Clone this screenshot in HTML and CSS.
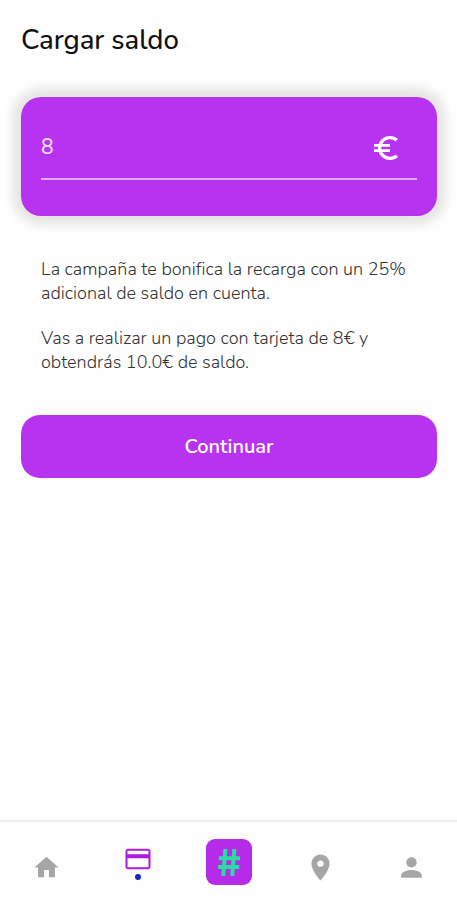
FILE: index.html
```html
<!DOCTYPE html>
<html lang="es">
  <head>
    <meta charset="UTF-8" />
    <meta name="viewport" content="width=device-width, initial-scale=1.0" />
    <title>Cargar saldo</title>
    <link rel="stylesheet" href="styles.css">
  </head>
  <body>
    <main class="content">
      <h1 class="title">Cargar saldo</h1>

      <div class="amount-card">
        <div class="amount-field">
          <span class="amount-value">8</span>
          <svg class="euro-icon" viewBox="0 0 24 24">
            <path d="M15 18.5c-2.51 0-4.68-1.42-5.76-3.5H15v-2H8.58c-.05-.33-.08-.66-.08-1s.03-.67.08-1H15V9H9.24C10.32 6.92 12.5 5.5 15 5.5c1.61 0 3.09.59 4.23 1.57L21 5.3C19.41 3.87 17.3 3 15 3c-3.92 0-7.24 2.51-8.48 6H3v2h3.06c-.04.33-.06.66-.06 1s.02.67.06 1H3v2h3.52c1.24 3.49 4.56 6 8.48 6 2.31 0 4.41-.87 6-2.3l-1.78-1.77c-1.13.98-2.6 1.57-4.22 1.57z" />
          </svg>
        </div>
      </div>

      <div class="info">
        <p class="info-campaign">
          La campaña te bonifica la recarga con un 25%<br />
          adicional de saldo en cuenta.
        </p>
        <p class="info-payment">
          Vas a realizar un pago con tarjeta de 8€ y<br />
          obtendrás 10.0€ de saldo.
        </p>
      </div>

      <button class="continue-button" type="button">Continuar</button>
    </main>

    <nav class="tab-bar">
      <a class="tab" href="#" aria-label="Inicio">
        <svg class="tab-icon" viewBox="0 0 24 24">
          <path d="M10 20v-6h4v6h5v-8h3L12 3 2 12h3v8z" />
        </svg>
      </a>
      <a class="tab active" href="#" aria-label="Saldo">
        <svg class="tab-icon" viewBox="0 0 24 24">
          <path d="M20 3.8H4c-1.11 0-1.99.8-1.99 1.9L2 18.2c0 1.11.89 2 2 2h16c1.11 0 2-.89 2-2V5.7c0-1.1-.89-1.9-2-1.9zm.4 14.8H3.6v-7.2h16.8v7.2zm0-10.4H3.6V5.4h16.8v2.8z" />
        </svg>
        <span class="tab-dot"></span>
      </a>
      <a class="tab main" href="#" aria-label="Principal">
        <span class="hash-box">
          <svg class="hash-icon" viewBox="0 0 22 27">
            <path d="M7.4 0L5.2 27M16.4 0L14.2 27M.8 9.3H22M0 17.9H21.2" />
          </svg>
        </span>
      </a>
      <a class="tab large" href="#" aria-label="Mapa">
        <svg class="tab-icon" viewBox="0 0 24 24">
          <path d="M12 2C8.13 2 5 5.13 5 9c0 5.25 7 13 7 13s7-7.75 7-13c0-3.87-3.13-7-7-7zm0 9.5c-1.38 0-2.5-1.12-2.5-2.5s1.12-2.5 2.5-2.5 2.5 1.12 2.5 2.5-1.12 2.5-2.5 2.5z" />
        </svg>
      </a>
      <a class="tab large" href="#" aria-label="Perfil">
        <svg class="tab-icon" viewBox="0 0 24 24">
          <path d="M12 12c2.21 0 4-1.79 4-4s-1.79-4-4-4-4 1.79-4 4 1.79 4 4 4zm0 2c-2.67 0-8 1.34-8 4v2h16v-2c0-2.66-5.33-4-8-4z" />
        </svg>
      </a>
    </nav>
  </body>
</html>
```
FILE: styles.css
```css
* {
  margin: 0;
  padding: 0;
  box-sizing: border-box;
}

body {
  height: 100vh;
  display: flex;
  flex-direction: column;
  background: #fefefe;
  color: #111;
  font-family: Nunito, "Open Sans", "Noto Sans", sans-serif;
  overflow: hidden;
}

.content {
  flex: 1;
  padding: 20px 20px 0 21px;
}

.title {
  font-size: 27.5px;
  font-weight: 500;
  line-height: 40px;
  letter-spacing: -0.05px;
  white-space: nowrap;
}

.amount-card {
  height: 119px;
  margin-top: 37px;
  padding: 20px;
  background: #b833ef;
  border-radius: 20px;
  box-shadow: 0 0 10px 9px #e6e6e4;
}

.amount-field {
  display: flex;
  align-items: center;
  justify-content: space-between;
  height: 63px;
  padding: 0 15px 2px 0;
  border-bottom: 2px solid #e2a9f9;
}

.amount-value {
  color: #f6dcfd;
  font-size: 21px;
  font-weight: 500;
  line-height: 28px;
}

.euro-icon {
  width: 32px;
  height: 32px;
  margin-top: 2px;
  fill: #fff;
}

.info {
  padding: 41px 0 0 20px;
  color: #333;
  font-size: 18px;
  font-weight: 300;
  line-height: 24px;
  letter-spacing: 0.02px;
  white-space: nowrap;
}

.info-payment {
  margin-top: 21px;
}

.continue-button {
  display: block;
  width: 100%;
  height: 63px;
  margin-top: 41px;
  border: none;
  border-radius: 19px;
  background: #b833ef;
  color: #fff;
  font-family: inherit;
  font-size: 20px;
  font-weight: 600;
}

.tab-bar {
  display: flex;
  height: 80px;
  padding-left: 1px;
  border-top: 2px solid #eeeeee;
}

.tab {
  flex: 1;
  display: flex;
  flex-direction: column;
  align-items: center;
  padding-top: 31px;
}

.tab-icon {
  width: 29px;
  height: 29px;
  fill: #a6a6a6;
}

.tab.large {
  padding-top: 30px;
}

.large .tab-icon {
  width: 31px;
  height: 31px;
}

.tab.active {
  padding-top: 22px;
}

.active .tab-icon {
  width: 30px;
  height: 30px;
  fill: #af18e3;
}

.tab-dot {
  width: 6px;
  height: 6px;
  border-radius: 50%;
  background: #1a22cb;
}

.tab.main {
  padding-top: 17px;
}

.hash-box {
  display: flex;
  align-items: center;
  justify-content: center;
  width: 46px;
  height: 46px;
  border-radius: 9px;
  background: #b52be9;
}

.hash-icon {
  width: 22px;
  height: 27px;
  fill: none;
  stroke: #28dda0;
  stroke-width: 4;
}
```
